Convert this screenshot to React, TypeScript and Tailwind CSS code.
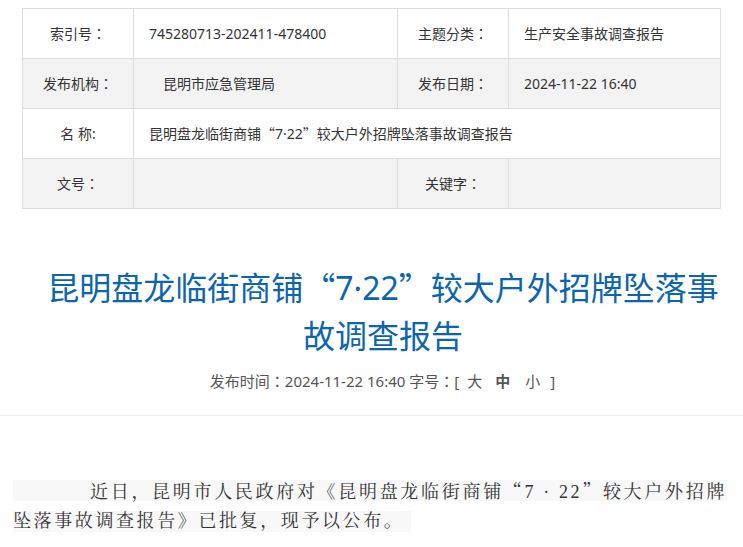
import React from "react";

const sans = "font-['Noto_Sans','Noto_Sans_CJK_SC',sans-serif]";

function C() {
  return <span className="font-['Noto_Sans_CJK_TC',sans-serif]">：</span>;
}

function Q({ c }: { c: string }) {
  return <span className="font-['Noto_Sans_CJK_SC',sans-serif]">{c}</span>;
}

export default function App() {
  const cellL = "border border-[#dddddd] text-center text-[14px] text-[#333333] w-[111px]";
  const cellV = "border border-[#dddddd] text-left text-[14px] text-[#333333] pl-[15px]";
  return (
    <div className={`w-[743px] min-h-[547px] bg-white ${sans}`}>
      <div className="pt-[8px] pl-[22px]">
        <table className="border-collapse w-[698px] table-fixed">
          <colgroup>
            <col className="w-[111px]" />
            <col className="w-[264px]" />
            <col className="w-[111px]" />
            <col className="w-[212px]" />
          </colgroup>
          <tbody>
            <tr className="h-[50px] bg-white">
              <td className={cellL}>索引号<C /></td>
              <td className={cellV}>745280713-202411-478400</td>
              <td className={cellL}>主题分类<C /></td>
              <td className={cellV}>生产安全事故调查报告</td>
            </tr>
            <tr className="h-[50px] bg-[#f3f3f3]">
              <td className={cellL}>发布机构<C /></td>
              <td className={`${cellV} !pl-[29px]`}>昆明市应急管理局</td>
              <td className={cellL}>发布日期<C /></td>
              <td className={cellV}>2024-11-22 16:40</td>
            </tr>
            <tr className="h-[50px] bg-white">
              <td className={cellL}>名 称:</td>
              <td className={cellV} colSpan={3}>
                昆明盘龙临街商铺<Q c="“" />7·22<Q c="”" />较大户外招牌坠落事故调查报告
              </td>
            </tr>
            <tr className="h-[50px] bg-[#f3f3f3]">
              <td className={cellL}>文号<C /></td>
              <td className={cellV}></td>
              <td className={cellL}>关键字<C /></td>
              <td className={cellV}></td>
            </tr>
          </tbody>
        </table>
      </div>

      <div className="mt-[53px] pl-[23px] text-center text-[32px] leading-[48px] text-[#0d65ad]">
        <div>
          昆明盘龙临街商铺<Q c="“" />7·22<Q c="”" />较大户外招牌坠落事
        </div>
        <div>故调查报告</div>
      </div>

      <div className="mt-[11px] pl-[22px] text-center text-[15px] leading-[20px] text-[#555555]">
        发布时间<C />2024-11-22 16:40 字号<C />[<span className="ml-[8px]">大</span>
        <span className="ml-[13px] font-bold">中</span>
        <span className="ml-[15px]">小</span>
        <span className="ml-[10px]">]</span>
      </div>

      <div className="mt-[24px] h-px bg-[#eeeeee]" />

      <div className="mt-[64px] pl-[13px] text-[18px] tracking-[2.6px] text-[#333333] font-['Liberation_Serif','Noto_Serif_CJK_SC','Noto_Sans_CJK_SC',serif]">
        <div className="w-[714px] h-[21px] leading-[21px] bg-[#f8f8f8] pl-[77px] whitespace-nowrap [text-align-last:justify]">
          近日，昆明市人民政府对《昆明盘龙临街商铺<span className="font-['Noto_Serif_CJK_SC','Noto_Sans_CJK_SC',serif]">“</span>7 · 22<span className="font-['Noto_Serif_CJK_SC','Noto_Sans_CJK_SC',serif]">”</span>较大户外招牌
        </div>
        <div className="mt-[10px] w-[398px] h-[21px] leading-[21px] bg-[#f8f8f8] whitespace-nowrap">
          坠落事故调查报告》已批复，现予以公布。
        </div>
      </div>
    </div>
  );
}
